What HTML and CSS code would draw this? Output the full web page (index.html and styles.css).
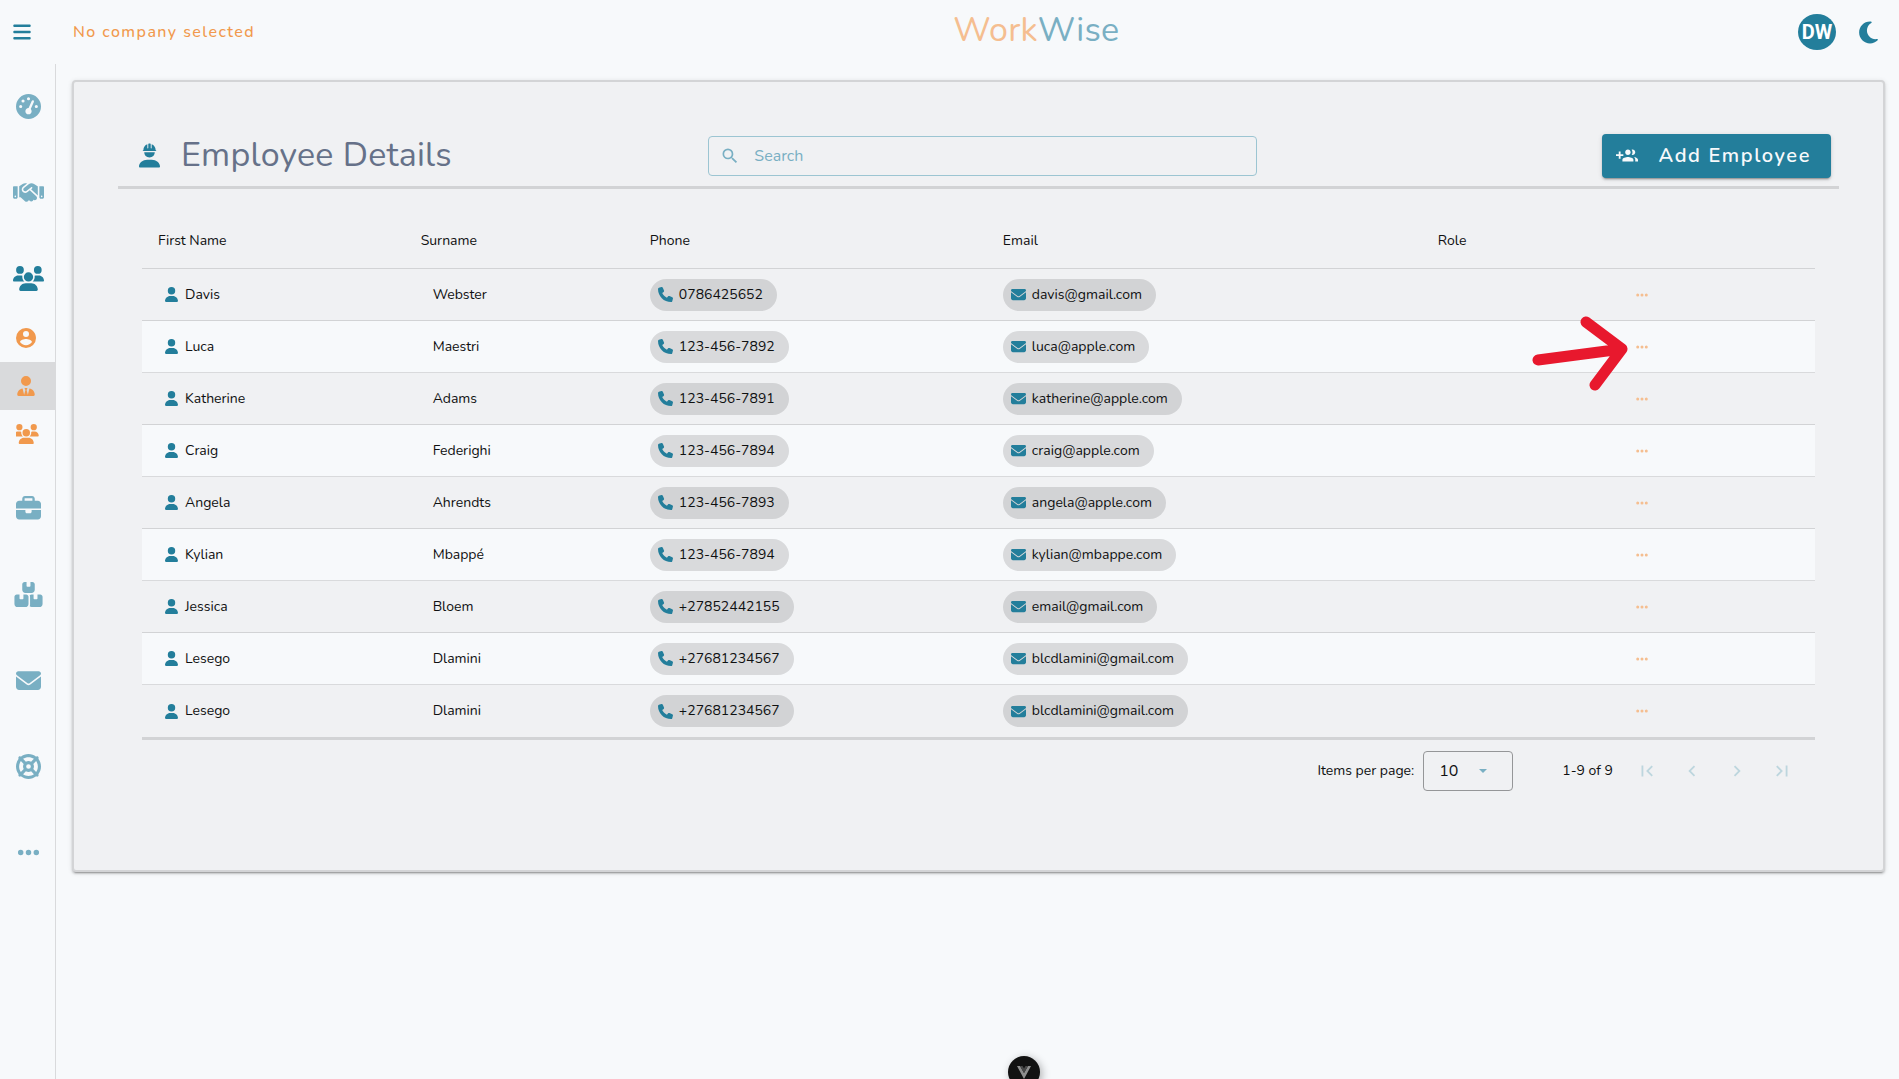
FILE: index.html
```
<!DOCTYPE html>
<html lang="en">
<head>
<meta charset="utf-8">
<meta name="viewport" content="width=device-width, initial-scale=1">
<title>WorkWise - Employee Details</title>
<link rel="stylesheet" href="styles.css">
</head>
<body>
<svg class="sprite" aria-hidden="true">
  <symbol id="i-user" viewBox="0 0 448 512"><path d="M224 256A128 128 0 1 0 224 0a128 128 0 1 0 0 256zm-45.7 48C79.8 304 0 383.8 0 482.3C0 498.7 13.3 512 29.7 512H418.3c16.4 0 29.7-13.3 29.7-29.7C448 383.8 368.2 304 269.7 304H178.3z"/></symbol>
  <symbol id="i-phone" viewBox="0 0 512 512"><path d="M164.9 24.6c-7.7-18.6-28-28.5-47.4-23.2l-88 24C12.1 30.2 0 46 0 64C0 311.4 200.6 512 448 512c18 0 33.8-12.1 38.6-29.5l24-88c5.3-19.4-4.6-39.7-23.2-47.4l-96-40c-16.3-6.8-35.2-2.1-46.3 11.6L304.7 368C234.3 334.7 177.3 277.7 144 207.3L193.3 167c13.7-11.2 18.4-30 11.6-46.3l-40-96z"/></symbol>
  <symbol id="i-mail" viewBox="0 0 512 512"><path d="M48 64C21.5 64 0 85.5 0 112c0 15.1 7.1 29.3 19.2 38.4L236.8 313.6c11.4 8.5 27 8.5 38.4 0L492.8 150.4c12.1-9.1 19.2-23.3 19.2-38.4c0-26.5-21.5-48-48-48H48zM0 176V384c0 35.3 28.7 64 64 64H448c35.3 0 64-28.7 64-64V176L294.4 339.2c-22.8 17.1-54 17.1-76.8 0L0 176z"/></symbol>
  <symbol id="i-dots" viewBox="0 0 448 512"><path d="M8 256a56 56 0 1 1 112 0A56 56 0 1 1 8 256zm160 0a56 56 0 1 1 112 0 56 56 0 1 1 -112 0zm216-56a56 56 0 1 1 0 112 56 56 0 1 1 0-112z"/></symbol>
  <symbol id="i-users" viewBox="0 0 640 512"><path id="users-shape" d="M144 0a80 80 0 1 1 0 160A80 80 0 1 1 144 0zM512 0a80 80 0 1 1 0 160A80 80 0 1 1 512 0zM0 298.7C0 239.8 47.8 192 106.7 192h42.7c15.9 0 31 3.5 44.6 9.7c-1.3 7.2-1.9 14.7-1.9 22.3c0 38.2 16.8 72.5 43.3 96H21.3C9.6 320 0 310.4 0 298.7zM405.3 320h-.7c26.6-23.5 43.3-57.8 43.3-96c0-7.6-.7-15-1.9-22.3c13.6-6.3 28.7-9.7 44.6-9.7h42.7C592.2 192 640 239.8 640 298.7c0 11.8-9.6 21.3-21.3 21.3H405.3zM224 224a96 96 0 1 1 192 0 96 96 0 1 1 -192 0zM128 485.3C128 411.7 187.7 352 261.3 352H378.7C452.3 352 512 411.7 512 485.3c0 14.7-11.9 26.7-26.7 26.7H154.7c-14.7 0-26.7-11.9-26.7-26.7z"/></symbol>
</svg>

<header class="topbar">
  <div class="topbar-left">
    <button class="icon-btn menu-btn" aria-label="Toggle menu"><svg viewBox="0 0 448 512"><path d="M0 96C0 78.3 14.3 64 32 64H416c17.7 0 32 14.3 32 32s-14.3 32-32 32H32C14.3 128 0 113.7 0 96zM0 256c0-17.7 14.3-32 32-32H416c17.7 0 32 14.3 32 32s-14.3 32-32 32H32c-17.7 0-32-14.3-32-32zM448 416c0 17.7-14.3 32-32 32H32c-17.7 0-32-14.3-32-32s14.3-32 32-32H416c17.7 0 32 14.3 32 32z"/></svg></button>
    <span class="company">No company selected</span>
  </div>
  <div class="logo"><span class="logo-work">Work</span>Wise</div>
  <div class="topbar-right">
    <button class="avatar" aria-label="Account">DW</button>
    <button class="icon-btn moon-btn" aria-label="Dark theme"><svg viewBox="0 0 384 512"><path d="M223.5 32C100 32 0 132.3 0 256S100 480 223.5 480c60.6 0 115.5-24.2 155.8-63.4c5-4.9 6.3-12.5 3.1-18.7s-10.1-9.7-17-8.5c-9.8 1.7-19.8 2.6-30.1 2.6c-96.9 0-175.5-78.8-175.5-176c0-65.8 36-123.1 89.3-153.3c6.1-3.5 9.2-10.5 7.7-17.3s-7.3-11.9-14.3-12.5c-6.3-.5-12.6-.8-19-.8z"/></svg></button>
  </div>
</header>

<div class="layout">
  <nav class="sidebar" aria-label="Main">
    <a class="nav-item" href="#" aria-label="Dashboard"><svg viewBox="0 0 512 512"><path d="M0 256a256 256 0 1 1 512 0A256 256 0 1 1 0 256zM288 96a32 32 0 1 0 -64 0 32 32 0 1 0 64 0zM256 416c35.3 0 64-28.7 64-64c0-17.4-6.9-33.1-18.1-44.6L366 161.7c5.3-12.1-.2-26.3-12.3-31.6s-26.3 .2-31.6 12.3L257.9 288H256c-35.3 0-64 28.7-64 64s28.7 64 64 64zM176 144a32 32 0 1 0 -64 0 32 32 0 1 0 64 0zM96 288a32 32 0 1 0 0-64 32 32 0 1 0 0 64zm352-32a32 32 0 1 0 -64 0 32 32 0 1 0 64 0z"/></svg></a>
    <a class="nav-item" href="#" aria-label="Clients"><svg viewBox="0 0 640 512"><path d="M323.4 85.2l-96.8 78.4c-16.1 13-19.2 36.4-7 53.1c12.9 17.8 38 21.3 55.3 7.8l99.3-77.2c7-5.4 17-4.2 22.5 2.8s4.2 17-2.8 22.5l-20.9 16.2L512 316.8V128h-.7l-3.9-2.5L434.8 79c-15.3-9.8-33.2-15-51.4-15c-21.8 0-43 7.5-60 21.2zm22.8 124.4l-51.7 40.2C263 274.3 217.3 268 193.7 235.6c-22.2-30.5-16.6-73.1 12.7-96.8l83.2-67.3c-11.6-4.9-24.1-7.4-36.8-7.4C234 64 215.7 69.6 200 80l-72 48V352h28.2l91.4 83.4c19.6 17.9 49.9 16.5 67.8-3.1c5.5-6.1 9.2-13.2 11.1-20.6l17 15.6c19.5 17.9 49.9 16.6 67.8-2.9c4.5-4.9 7.8-10.6 9.9-16.5c19.4 13 45.8 10.3 62.1-7.5c17.9-19.5 16.6-49.9-2.9-67.8l-134.2-123zM16 128c-8.8 0-16 7.2-16 16V352c0 17.7 14.3 32 32 32H64c17.7 0 32-14.3 32-32V128H16zM48 320a16 16 0 1 1 0 32 16 16 0 1 1 0-32zM544 128V352c0 17.7 14.3 32 32 32h32c17.7 0 32-14.3 32-32V144c0-8.8-7.2-16-16-16H544zm32 208a16 16 0 1 1 32 0 16 16 0 1 1 -32 0z"/></svg></a>
    <a class="nav-item current" href="#" aria-label="People"><svg><use href="#i-users"/></svg></a>
    <div class="subnav">
      <a class="sub-item" href="#" aria-label="Profiles"><svg viewBox="2 2 20 20"><path d="M12,19.2C9.5,19.2 7.29,17.92 6,16C6.03,14 10,12.9 12,12.9C14,12.9 17.97,14 18,16C16.71,17.92 14.5,19.2 12,19.2M12,5A3,3 0 0,1 15,8A3,3 0 0,1 12,11A3,3 0 0,1 9,8A3,3 0 0,1 12,5M12,2A10,10 0 0,0 2,12A10,10 0 0,0 12,22A10,10 0 0,0 22,12C22,6.47 17.5,2 12,2Z"/></svg></a>
      <a class="sub-item active" href="#" aria-label="Employees" aria-current="page"><svg viewBox="0 0 448 512"><path d="M224 256A128 128 0 1 1 224 0a128 128 0 1 1 0 256zM209.1 359.2l-18.6-31c-6.4-10.7 1.3-24.2 13.7-24.2H224h19.7c12.4 0 20.1 13.6 13.7 24.2l-18.6 31 33.4 123.9 39.5-161.2c77.2 12 136.3 78.8 136.3 159.4c0 17-13.8 30.7-30.7 30.7H265.1 182.9 30.7C13.8 512 0 498.2 0 481.3c0-80.6 59.1-147.4 136.3-159.4l39.5 161.2 33.4-123.9z"/></svg></a>
      <a class="sub-item" href="#" aria-label="Teams"><svg class="wide" viewBox="64 0 576 512"><use href="#users-shape"/></svg></a>
    </div>
    <a class="nav-item" href="#" aria-label="Jobs"><svg viewBox="0 0 512 512"><path d="M184 48H328c4.4 0 8 3.6 8 8V96H176V56c0-4.4 3.6-8 8-8zm-56 8V96H64C28.7 96 0 124.7 0 160v96H512V160c0-35.3-28.7-64-64-64H384V56c0-30.9-25.1-56-56-56H184c-30.9 0-56 25.1-56 56zM512 288H320v32c0 17.7-14.3 32-32 32H224c-17.7 0-32-14.3-32-32V288H0V416c0 35.3 28.7 64 64 64H448c35.3 0 64-28.7 64-64V288z"/></svg></a>
    <a class="nav-item" href="#" aria-label="Inventory"><svg viewBox="0 0 576 512"><path d="M248 0H208c-26.5 0-48 21.5-48 48V160c0 35.3 28.7 64 64 64H352c35.3 0 64-28.7 64-64V48c0-26.5-21.5-48-48-48H328V80c0 8.8-7.2 16-16 16H264c-8.8 0-16-7.2-16-16V0zM48 256c-26.5 0-48 21.5-48 48V448c0 35.3 28.7 64 64 64H224c35.3 0 64-28.7 64-64V304c0-26.5-21.5-48-48-48H184v80c0 8.8-7.2 16-16 16H120c-8.8 0-16-7.2-16-16V256H48zM352 512H512c35.3 0 64-28.7 64-64V304c0-26.5-21.5-48-48-48H472v80c0 8.8-7.2 16-16 16H408c-8.8 0-16-7.2-16-16V256H352c-15 0-28.8 5.1-39.7 13.8c4.9 10.4 7.7 22 7.7 34.2V464c0 12.2-2.8 23.8-7.7 34.2C323.2 506.9 337 512 352 512z"/></svg></a>
    <a class="nav-item" href="#" aria-label="Inbox"><svg><use href="#i-mail"/></svg></a>
    <a class="nav-item" href="#" aria-label="Support"><svg viewBox="0 0 512 512"><path d="M367.2 412.5C335.9 434.9 297.5 448 256 448s-79.9-13.1-111.2-35.5l58-58c15.8 8.6 34 13.5 53.3 13.5s37.4-4.9 53.3-13.5l58 58zm90.7 .8c33.8-43.4 54-98 54-157.3s-20.2-113.9-54-157.3c9-12.5 7.9-30.1-3.4-41.3S425.8 45 413.3 54C369.9 20.2 315.3 0 256 0S142.1 20.2 98.7 54c-12.5-9-30.1-7.9-41.3 3.4S45 86.2 54 98.7C20.2 142.1 0 196.7 0 256s20.2 113.9 54 157.3c-9 12.5-7.9 30.1 3.4 41.3S86.2 467 98.7 458c43.4 33.8 98 54 157.3 54s113.9-20.2 157.3-54c12.5 9 30.1 7.9 41.3-3.4s12.4-28.8 3.4-41.3zm-45.5-46.1l-58-58c8.6-15.8 13.5-34 13.5-53.3s-4.9-37.4-13.5-53.3l58-58C434.9 176.1 448 214.5 448 256s-13.1 79.9-35.5 111.2zM367.2 99.5l-58 58c-15.8-8.6-34-13.5-53.3-13.5s-37.4 4.9-53.3 13.5l-58-58C176.1 77.1 214.5 64 256 64s79.9 13.1 111.2 35.5zM157.5 309.3l-58 58C77.1 335.9 64 297.5 64 256s13.1-79.9 35.5-111.2l58 58c-8.6 15.8-13.5 34-13.5 53.3s4.9 37.4 13.5 53.3zM208 256a48 48 0 1 1 96 0 48 48 0 1 1 -96 0z"/></svg></a>
    <a class="nav-item" href="#" aria-label="More"><svg><use href="#i-dots"/></svg></a>
  </nav>

  <main class="content">
    <section class="card">
      <div class="card-head">
        <h1 class="title">
          <svg viewBox="0 0 448 512"><path d="M178 14v82a10 10 0 0 0 20 0V16q0-16 14-16h24q14 0 14 16v80a10 10 0 0 0 20 0V14c50 18 84 64 84 118v10h6q10 0 10 9t-10 9H88q-10 0-10-9t10-9h6v-10c0-54 34-100 84-118zM112 188H336c0 66-46 108-112 108s-112-42-112-108zM178 344h92c98 0 178 66 178 144 0 16-10 24-24 24H24c-14 0-24-8-24-24 0-78 80-144 178-144z"/></svg>
          Employee Details
        </h1>
        <label class="search">
          <svg viewBox="0 0 24 24"><path d="M9.5,3A6.5,6.5 0 0,1 16,9.5C16,11.11 15.41,12.59 14.44,13.73L14.71,14H15.5L20.5,19L19,20.5L14,15.5V14.71L13.73,14.44C12.59,15.41 11.11,16 9.5,16A6.5,6.5 0 0,1 3,9.5A6.5,6.5 0 0,1 9.5,3M9.5,5C7,5 5,7 5,9.5C5,12 7,14 9.5,14C12,14 14,12 14,9.5C14,7 12,5 9.5,5Z"/></svg>
          <input type="text" placeholder="Search" aria-label="Search">
        </label>
        <button class="add-btn">
          <svg viewBox="0 0 24 24"><path d="M13 13C11 13 7 14 7 16V18H19V16C19 14 15 13 13 13M19.62 13.16C20.45 13.88 21 14.82 21 16V18H24V16C24 14.46 21.63 13.5 19.62 13.16M13 11C14.66 11 16 9.66 16 8C16 6.34 14.66 5 13 5C11.34 5 10 6.34 10 8C10 9.66 11.34 11 13 11M18 11C19.66 11 21 9.66 21 8C21 6.34 19.66 5 18 5C17.68 5 17.37 5.05 17.08 5.14C17.65 5.95 18 6.94 18 8C18 9.06 17.65 10.04 17.08 10.85C17.37 10.95 17.68 11 18 11M8 10H5V7H3V10H0V12H3V15H5V12H8V10Z"/></svg>
          Add Employee
        </button>
      </div>

      <div class="table-wrap">
        <table class="employees">
          <thead>
            <tr><th class="c-first">First Name</th><th class="c-sur">Surname</th><th class="c-phone">Phone</th><th class="c-email">Email</th><th class="c-role">Role</th><th aria-label="Actions"></th></tr>
          </thead>
          <tbody>
            <tr><td><span class="name"><svg><use href="#i-user"/></svg>Davis</span></td><td class="sur">Webster</td><td><span class="chip"><svg><use href="#i-phone"/></svg>0786425652</span></td><td><span class="chip"><svg><use href="#i-mail"/></svg>davis@gmail.com</span></td><td></td><td><button class="row-menu" aria-label="Actions"><svg><use href="#i-dots"/></svg></button></td></tr>
            <tr><td><span class="name"><svg><use href="#i-user"/></svg>Luca</span></td><td class="sur">Maestri</td><td><span class="chip"><svg><use href="#i-phone"/></svg>123-456-7892</span></td><td><span class="chip"><svg><use href="#i-mail"/></svg>luca@apple.com</span></td><td></td><td><button class="row-menu" aria-label="Actions"><svg><use href="#i-dots"/></svg></button></td></tr>
            <tr><td><span class="name"><svg><use href="#i-user"/></svg>Katherine</span></td><td class="sur">Adams</td><td><span class="chip"><svg><use href="#i-phone"/></svg>123-456-7891</span></td><td><span class="chip"><svg><use href="#i-mail"/></svg>katherine@apple.com</span></td><td></td><td><button class="row-menu" aria-label="Actions"><svg><use href="#i-dots"/></svg></button></td></tr>
            <tr><td><span class="name"><svg><use href="#i-user"/></svg>Craig</span></td><td class="sur">Federighi</td><td><span class="chip"><svg><use href="#i-phone"/></svg>123-456-7894</span></td><td><span class="chip"><svg><use href="#i-mail"/></svg>craig@apple.com</span></td><td></td><td><button class="row-menu" aria-label="Actions"><svg><use href="#i-dots"/></svg></button></td></tr>
            <tr><td><span class="name"><svg><use href="#i-user"/></svg>Angela</span></td><td class="sur">Ahrendts</td><td><span class="chip"><svg><use href="#i-phone"/></svg>123-456-7893</span></td><td><span class="chip"><svg><use href="#i-mail"/></svg>angela@apple.com</span></td><td></td><td><button class="row-menu" aria-label="Actions"><svg><use href="#i-dots"/></svg></button></td></tr>
            <tr><td><span class="name"><svg><use href="#i-user"/></svg>Kylian</span></td><td class="sur">Mbappé</td><td><span class="chip"><svg><use href="#i-phone"/></svg>123-456-7894</span></td><td><span class="chip"><svg><use href="#i-mail"/></svg>kylian@mbappe.com</span></td><td></td><td><button class="row-menu" aria-label="Actions"><svg><use href="#i-dots"/></svg></button></td></tr>
            <tr><td><span class="name"><svg><use href="#i-user"/></svg>Jessica</span></td><td class="sur">Bloem</td><td><span class="chip"><svg><use href="#i-phone"/></svg>+27852442155</span></td><td><span class="chip"><svg><use href="#i-mail"/></svg>email@gmail.com</span></td><td></td><td><button class="row-menu" aria-label="Actions"><svg><use href="#i-dots"/></svg></button></td></tr>
            <tr><td><span class="name"><svg><use href="#i-user"/></svg>Lesego</span></td><td class="sur">Dlamini</td><td><span class="chip"><svg><use href="#i-phone"/></svg>+27681234567</span></td><td><span class="chip"><svg><use href="#i-mail"/></svg>blcdlamini@gmail.com</span></td><td></td><td><button class="row-menu" aria-label="Actions"><svg><use href="#i-dots"/></svg></button></td></tr>
            <tr><td><span class="name"><svg><use href="#i-user"/></svg>Lesego</span></td><td class="sur">Dlamini</td><td><span class="chip"><svg><use href="#i-phone"/></svg>+27681234567</span></td><td><span class="chip"><svg><use href="#i-mail"/></svg>blcdlamini@gmail.com</span></td><td></td><td><button class="row-menu" aria-label="Actions"><svg><use href="#i-dots"/></svg></button></td></tr>
          </tbody>
        </table>

        <div class="pager">
          <label for="per-page">Items per page:</label>
          <div class="select">
            <select id="per-page"><option>10</option><option>25</option><option>50</option></select>
            <svg viewBox="7 10 10 5"><path d="M7,10L12,15L17,10H7Z"/></svg>
          </div>
          <span class="range">1-9 of 9</span>
          <div class="pages">
            <button disabled aria-label="First page"><svg viewBox="0 0 24 24"><path d="M18.41,16.59L13.82,12L18.41,7.41L17,6L11,12L17,18L18.41,16.59M6,6H8V18H6V6Z"/></svg></button>
            <button disabled aria-label="Previous page"><svg viewBox="0 0 24 24"><path d="M15.41,16.58L10.83,12L15.41,7.41L14,6L8,12L14,18L15.41,16.58Z"/></svg></button>
            <button disabled aria-label="Next page"><svg viewBox="0 0 24 24"><path d="M8.59,16.58L13.17,12L8.59,7.41L10,6L16,12L10,18L8.59,16.58Z"/></svg></button>
            <button disabled aria-label="Last page"><svg viewBox="0 0 24 24"><path d="M5.59,7.41L10.18,12L5.59,16.59L7,18L13,12L7,6L5.59,7.41M16,6H18V18H16V6Z"/></svg></button>
          </div>
        </div>
      </div>
    </section>
    <svg class="pointer" viewBox="0 0 96 76" aria-hidden="true"><path d="M6 44L90 33M54 6L90 33L63 69"/></svg>
  </main>
</div>

<button class="devtools" aria-label="Vue DevTools"><svg viewBox="0 0 14 13"><path fill="#8e8e8e" d="M0 0h3l4 7 4-7h3L7 13z"/><path fill="#4a4a4a" d="M3 0h2.500L7 2.600 8.500 0H11L7 7z"/></svg></button>
</body>
</html>
```
FILE: styles.css
```
:root {
  --bg: #f7f9fb;
  --surface: #f0f1f3;
  --line: rgba(0, 0, 0, 0.12);
  --primary: #237e9b;
  --primary-soft: #79afc3;
  --accent: #f1994d;
  --accent-soft: #f5be90;
  --text: #0f1011;
}

* { box-sizing: border-box; }

body {
  margin: 0;
  min-height: 100vh;
  display: flex;
  flex-direction: column;
  background: var(--bg);
  color: var(--text);
  font: 14px/20px Nunito, Lato, sans-serif;
}

svg { display: block; fill: currentColor; flex: none; }
button, input, select { font: inherit; color: inherit; }
button { border: 0; padding: 0; background: none; cursor: pointer; }
.sprite { position: absolute; width: 0; height: 0; }

/* Top bar */
.topbar {
  height: 64px;
  display: grid;
  grid-template-columns: 50.2% auto 1fr;
  align-items: center;
}
.topbar-left { display: flex; align-items: center; gap: 42px; padding-left: 13px; }
.icon-btn { color: var(--primary); }
.menu-btn svg { width: 18px; height: 20px; }
.company { color: var(--accent); font-size: 16px; font-weight: 500; letter-spacing: 0.0892em; }
.logo {
  color: var(--primary-soft);
  font-size: 34px;
  line-height: 40px;
  letter-spacing: 0.0073em;
  padding-bottom: 4px;
}
.logo-work { color: var(--accent-soft); }
.topbar-right { display: flex; align-items: center; justify-content: flex-end; gap: 23px; padding-right: 21px; }
.avatar {
  width: 38px;
  height: 36px;
  border-radius: 50%;
  background: var(--primary);
  color: #fff;
  font: 700 20px/36px Roboto, sans-serif;
}
.moon-btn svg { width: 19px; height: 25px; }

/* Sidebar */
.layout { flex: 1; display: flex; align-items: stretch; }
.sidebar {
  width: 56px;
  flex: none;
  display: flex;
  flex-direction: column;
  gap: 15px;
  padding-top: 7px;
  border-right: 1px solid var(--line);
}
.nav-item {
  height: 71px;
  display: flex;
  align-items: center;
  padding-left: 13px;
  color: var(--primary-soft);
}
.nav-item svg { width: 31px; height: 25px; }
.nav-item.current { color: var(--primary); margin-bottom: -15px; }
.sub-item {
  height: 48px;
  display: flex;
  align-items: center;
  padding-left: 16px;
  color: var(--accent);
}
.sub-item svg { width: 20px; height: 20px; }
.sub-item svg.wide { width: 23px; }
.sub-item.active { background: var(--line); }

/* Card */
.content { flex: 1; min-width: 0; position: relative; padding: 16px 14px 24px 16px; }
.card {
  padding: 52px 44px 79px;
  background: var(--surface);
  border: 2px solid #d3d4d6;
  border-radius: 4px;
  box-shadow: 0 3px 1px -2px rgba(0, 0, 0, 0.2), 0 2px 2px 0 rgba(0, 0, 0, 0.14), 0 1px 5px 0 rgba(0, 0, 0, 0.12);
}
.card-head {
  display: grid;
  grid-template-columns: 34.3% 31.9% 1fr;
  align-items: center;
  padding-bottom: 8px;
  border-bottom: 3px solid var(--line);
}
.title {
  display: flex;
  align-items: center;
  gap: 21px;
  margin: 0;
  padding: 0 0 2px 21px;
  color: #667189;
  font-size: 34px;
  font-weight: 400;
  line-height: 40px;
  letter-spacing: 0.0073em;
}
.title svg { width: 21px; height: 25px; color: var(--primary); }
.search {
  height: 40px;
  display: flex;
  align-items: center;
  gap: 14px;
  padding: 0 11px;
  border: 1px solid #9cc5d2;
  border-radius: 4px;
  color: var(--primary-soft);
}
.search svg { width: 20px; height: 20px; }
.search input { flex: 1; min-width: 0; border: 0; padding: 0; background: none; outline: 0; font-size: 16px; }
.search input::placeholder { color: var(--primary-soft); opacity: 1; }
.add-btn {
  justify-self: end;
  height: 44px;
  display: flex;
  align-items: center;
  gap: 20px;
  margin-right: 8px;
  padding: 0 20px 0 14px;
  border-radius: 4px;
  background: var(--primary);
  color: var(--bg);
  font-size: 20px;
  font-weight: 600;
  letter-spacing: 0.08em;
  box-shadow: 0 3px 1px -2px rgba(0, 0, 0, 0.2), 0 2px 2px 0 rgba(0, 0, 0, 0.14), 0 1px 5px 0 rgba(0, 0, 0, 0.12);
}
.add-btn svg { width: 22px; height: 22px; }

/* Table */
.table-wrap { margin: 24px 24px 0; }
.employees {
  width: 100%;
  table-layout: fixed;
  border-collapse: separate;
  border-spacing: 0;
  border-bottom: 3px solid var(--line);
}
.employees th { height: 56px; padding: 0 16px; text-align: left; font-weight: 400; border-bottom: 1px solid var(--line); }
.employees td { height: 52px; padding: 0 16px; border-bottom: 1px solid var(--line); }
.employees tbody tr:last-child td { border-bottom: 0; }
.employees tbody tr:nth-child(even) { background: var(--bg); }
.c-first { width: 15.7%; }
.c-sur { width: 13.7%; }
.c-phone { width: 21.1%; }
.c-email { width: 26%; }
.c-role { width: 11.2%; }
.employees td.sur { padding-left: 28px; }
.name { display: flex; align-items: center; gap: 7px; padding-left: 7px; }
.name svg { width: 13px; height: 15px; color: var(--primary); }
.chip {
  display: inline-flex;
  align-items: center;
  gap: 6px;
  height: 32px;
  padding: 0 14px 0 8px;
  border-radius: 16px;
  background: var(--line);
  vertical-align: middle;
}
.chip svg { width: 15px; height: 15px; color: var(--primary); }
.row-menu { display: block; padding: 8px 11px; color: var(--accent-soft); }
.row-menu svg { width: 12px; height: 14px; }

/* Pager */
.pager { display: flex; align-items: center; justify-content: flex-end; padding: 11px 11px 0 0; }
.select { position: relative; margin: 0 49px 0 9px; }
.select select {
  display: block;
  width: 90px;
  height: 40px;
  padding: 0 15px;
  appearance: none;
  border: 1px solid #959698;
  border-radius: 4px;
  background: none;
  font-size: 16px;
}
.select svg { position: absolute; top: 18px; right: 26px; width: 8px; height: 4px; color: var(--primary-soft); pointer-events: none; }
.pages { display: flex; margin-left: 11px; }
.pages button { width: 45px; height: 40px; display: grid; place-items: center; color: #bdd6de; }
.pages svg { width: 22px; height: 22px; }

/* Annotation arrow over the table */
.pointer {
  position: absolute;
  top: 252px;
  right: 271px;
  width: 96px;
  height: 76px;
  fill: none;
  stroke: #e8182d;
  stroke-width: 11;
  stroke-linecap: round;
  stroke-linejoin: round;
}

.devtools {
  position: fixed;
  bottom: -9px;
  left: calc(50% + 58px);
  width: 32px;
  height: 32px;
  display: grid;
  place-items: center;
  border-radius: 50%;
  background: #121212;
  box-shadow: 2px 2px 8px rgba(0, 0, 0, 0.3);
}
.devtools svg { width: 14px; height: 13px; }
```
